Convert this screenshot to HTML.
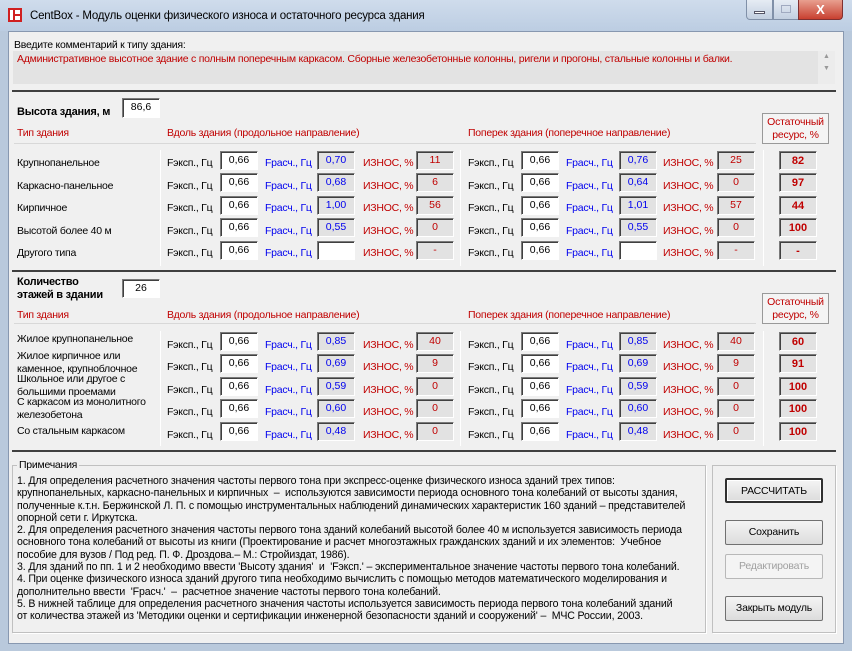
<!DOCTYPE html>
<html><head><meta charset="utf-8">
<style>
*{margin:0;padding:0;box-sizing:border-box}
body{width:852px;height:651px;overflow:hidden;background:#b9c9dc;font-family:"Liberation Sans",sans-serif;font-size:11px;color:#000;position:relative}
.a{position:absolute;white-space:nowrap}
.t{position:absolute;white-space:nowrap;font-size:10.5px;letter-spacing:-0.25px;line-height:13px}
.r{color:#c00000}.b{color:#0000ee}
.in,.ro,.rs{position:absolute;height:19px;border:1px solid;border-color:#7a7a7a #fff #fff #7a7a7a;box-shadow:inset 1px 1px #404040;text-align:center;font-size:10.5px;line-height:14px;padding-top:1px}
.in{background:#fff;width:38px}
.ro{background:#e2e2e2;width:38px;color:#0000ee}
.ro.i{color:#c00000}
.rs{background:#e2e2e2;width:38px;color:#c00000;font-weight:bold;font-size:11px;padding-top:2px}
.vl{position:absolute;width:1px;background:#d0d0d0;border-right:1px solid #fff}
.hl{position:absolute;height:2px;background:#404040}
.btn{position:absolute;left:725px;width:98px;height:25px;background:linear-gradient(#f4f4f4,#dcdcdc);border:1px solid #707070;border-radius:2px;text-align:center;line-height:23px;font-size:10.5px;letter-spacing:-0.2px}
</style></head><body>
<div class="a" style="left:0;top:0;width:852px;height:31px;background:linear-gradient(#cfdcec,#bccde2)"></div>
<div class="a" style="left:8px;top:8px;width:14px;height:14px;border:2px solid #d02020;background:#fff"></div>
<div class="a" style="left:13px;top:8px;width:2px;height:14px;background:#d02020"></div>
<div class="a" style="left:13px;top:14px;width:7px;height:2px;background:#d02020"></div>
<div class="t" style="left:30px;top:10px;font-size:11.5px;letter-spacing:-0.2px">CentBox - Модуль оценки физического износа и остаточного ресурса здания</div>
<div class="a" style="left:746px;top:0;width:27px;height:20px;background:linear-gradient(#e6ecf4,#c2cfe0);border:1px solid #8090a8;border-top:none;border-radius:0 0 0 4px"></div>
<div class="a" style="left:754px;top:11px;width:11px;height:3px;background:#fff;border:1px solid #556"></div>
<div class="a" style="left:773px;top:0;width:26px;height:20px;background:linear-gradient(#e6ecf4,#c2cfe0);border:1px solid #8090a8;border-top:none"></div>
<div class="a" style="left:781px;top:5px;width:10px;height:8px;border:1px solid #a0aac0"></div>
<div class="a" style="left:798px;top:0;width:45px;height:20px;background:linear-gradient(#e8a090,#c84030);border:1px solid #803030;border-top:none;border-radius:0 0 4px 0;color:#fff;font-weight:bold;text-align:center;line-height:19px;font-size:13px">X</div>
<div class="a" style="left:8px;top:31px;width:836px;height:613px;background:#f0f0f0;border:1px solid #8898b0"></div>

<div class="t" style="left:14px;top:39px">Введите комментарий к типу здания:</div>
<div class="a" style="left:13px;top:51px;width:805px;height:33px;background:#e3e3e3"></div>
<div class="t r" style="left:17px;top:53px">Административное высотное здание с полным поперечным каркасом. Сборные железобетонные колонны, ригели и прогоны, стальные колонны и балки.</div>
<div class="a" style="left:818px;top:51px;width:17px;height:33px;background:#ececec;color:#999;font-size:7px;text-align:center;line-height:12px">▲<br>▼</div>
<div class="hl" style="left:12px;top:90px;width:824px"></div>

<div class="t" style="left:17px;top:106px;font-weight:bold;font-size:11px">Высота здания, м</div>
<div class="in" style="left:122px;top:98px;height:20px">86,6</div>
<div class="a" style="left:762px;top:113px;width:67px;height:31px;border:1px solid #999;color:#c00000;text-align:center;line-height:13px;padding-top:2px;background:#f4f4f4;font-size:10.5px;letter-spacing:-0.2px">Остаточный<br>ресурс, %</div>

<div class="t r" style="left:17px;top:127px">Тип здания</div>
<div class="t r" style="left:167px;top:127px">Вдоль здания (продольное направление)</div>
<div class="t r" style="left:468px;top:127px">Поперек здания (поперечное направление)</div>
<div class="a" style="left:14px;top:143px;width:742px;height:1px;background:#fff;border-top:1px solid #d8d8d8"></div>
<div class="vl" style="left:160px;top:150px;height:116px"></div>
<div class="vl" style="left:460px;top:150px;height:116px"></div>
<div class="vl" style="left:763px;top:150px;height:116px"></div>

<div class="t" style="left:17px;top:157px">Крупнопанельное</div>
<div class="t" style="left:17px;top:180px">Каркасно-панельное</div>
<div class="t" style="left:17px;top:202px">Кирпичное</div>
<div class="t" style="left:17px;top:225px">Высотой более 40 м</div>
<div class="t" style="left:17px;top:247px">Другого типа</div>

<div class="t" style="left:167px;top:157px">Fэксп., Гц</div><div class="in" style="left:220px;top:151px">0,66</div><div class="t b" style="left:265px;top:157px">Fрасч., Гц</div><div class="ro" style="left:317px;top:151px">0,70</div><div class="t r" style="left:363px;top:157px">ИЗНОС, %</div><div class="ro i" style="left:416px;top:151px">11</div>
<div class="t" style="left:468px;top:157px">Fэксп., Гц</div><div class="in" style="left:521px;top:151px">0,66</div><div class="t b" style="left:566px;top:157px">Fрасч., Гц</div><div class="ro" style="left:619px;top:151px">0,76</div><div class="t r" style="left:663px;top:157px">ИЗНОС, %</div><div class="ro i" style="left:717px;top:151px">25</div><div class="rs" style="left:779px;top:151px">82</div>

<div class="t" style="left:167px;top:180px">Fэксп., Гц</div><div class="in" style="left:220px;top:173px">0,66</div><div class="t b" style="left:265px;top:180px">Fрасч., Гц</div><div class="ro" style="left:317px;top:173px">0,68</div><div class="t r" style="left:363px;top:180px">ИЗНОС, %</div><div class="ro i" style="left:416px;top:173px">6</div>
<div class="t" style="left:468px;top:180px">Fэксп., Гц</div><div class="in" style="left:521px;top:173px">0,66</div><div class="t b" style="left:566px;top:180px">Fрасч., Гц</div><div class="ro" style="left:619px;top:173px">0,64</div><div class="t r" style="left:663px;top:180px">ИЗНОС, %</div><div class="ro i" style="left:717px;top:173px">0</div><div class="rs" style="left:779px;top:173px">97</div>

<div class="t" style="left:167px;top:202px">Fэксп., Гц</div><div class="in" style="left:220px;top:196px">0,66</div><div class="t b" style="left:265px;top:202px">Fрасч., Гц</div><div class="ro" style="left:317px;top:196px">1,00</div><div class="t r" style="left:363px;top:202px">ИЗНОС, %</div><div class="ro i" style="left:416px;top:196px">56</div>
<div class="t" style="left:468px;top:202px">Fэксп., Гц</div><div class="in" style="left:521px;top:196px">0,66</div><div class="t b" style="left:566px;top:202px">Fрасч., Гц</div><div class="ro" style="left:619px;top:196px">1,01</div><div class="t r" style="left:663px;top:202px">ИЗНОС, %</div><div class="ro i" style="left:717px;top:196px">57</div><div class="rs" style="left:779px;top:196px">44</div>

<div class="t" style="left:167px;top:225px">Fэксп., Гц</div><div class="in" style="left:220px;top:218px">0,66</div><div class="t b" style="left:265px;top:225px">Fрасч., Гц</div><div class="ro" style="left:317px;top:218px">0,55</div><div class="t r" style="left:363px;top:225px">ИЗНОС, %</div><div class="ro i" style="left:416px;top:218px">0</div>
<div class="t" style="left:468px;top:225px">Fэксп., Гц</div><div class="in" style="left:521px;top:218px">0,66</div><div class="t b" style="left:566px;top:225px">Fрасч., Гц</div><div class="ro" style="left:619px;top:218px">0,55</div><div class="t r" style="left:663px;top:225px">ИЗНОС, %</div><div class="ro i" style="left:717px;top:218px">0</div><div class="rs" style="left:779px;top:218px">100</div>

<div class="t" style="left:167px;top:247px">Fэксп., Гц</div><div class="in" style="left:220px;top:241px">0,66</div><div class="t b" style="left:265px;top:247px">Fрасч., Гц</div><div class="in" style="left:317px;top:241px"></div><div class="t r" style="left:363px;top:247px">ИЗНОС, %</div><div class="ro i" style="left:416px;top:241px">-</div>
<div class="t" style="left:468px;top:247px">Fэксп., Гц</div><div class="in" style="left:521px;top:241px">0,66</div><div class="t b" style="left:566px;top:247px">Fрасч., Гц</div><div class="in" style="left:619px;top:241px"></div><div class="t r" style="left:663px;top:247px">ИЗНОС, %</div><div class="ro i" style="left:717px;top:241px">-</div><div class="rs" style="left:779px;top:241px">-</div>

<div class="hl" style="left:12px;top:270px;width:824px"></div>

<div class="t" style="left:17px;top:276px;font-weight:bold;font-size:11px;line-height:13px">Количество<br>этажей в здании</div>
<div class="in" style="left:122px;top:279px;height:19px">26</div>
<div class="a" style="left:762px;top:293px;width:67px;height:31px;border:1px solid #999;color:#c00000;text-align:center;line-height:13px;padding-top:2px;background:#f4f4f4;font-size:10.5px;letter-spacing:-0.2px">Остаточный<br>ресурс, %</div>
<div class="t r" style="left:17px;top:309px">Тип здания</div>
<div class="t r" style="left:167px;top:309px">Вдоль здания (продольное направление)</div>
<div class="t r" style="left:468px;top:309px">Поперек здания (поперечное направление)</div>
<div class="a" style="left:14px;top:323px;width:742px;height:1px;background:#fff;border-top:1px solid #d8d8d8"></div>
<div class="vl" style="left:160px;top:331px;height:115px"></div>
<div class="vl" style="left:460px;top:331px;height:115px"></div>
<div class="vl" style="left:763px;top:331px;height:115px"></div>

<div class="t" style="left:17px;top:333px">Жилое крупнопанельное</div>
<div class="t" style="left:17px;top:350px;line-height:12.5px">Жилое кирпичное или<br>каменное, крупноблочное</div>
<div class="t" style="left:17px;top:373px;line-height:12.5px">Школьное или другое с<br>большими проемами</div>
<div class="t" style="left:17px;top:396px;line-height:12.5px">С каркасом из монолитного<br>железобетона</div>
<div class="t" style="left:17px;top:425px">Со стальным каркасом</div>

<div class="t" style="left:167px;top:339px">Fэксп., Гц</div><div class="in" style="left:220px;top:332px">0,66</div><div class="t b" style="left:265px;top:339px">Fрасч., Гц</div><div class="ro" style="left:317px;top:332px">0,85</div><div class="t r" style="left:363px;top:339px">ИЗНОС, %</div><div class="ro i" style="left:416px;top:332px">40</div>
<div class="t" style="left:468px;top:339px">Fэксп., Гц</div><div class="in" style="left:521px;top:332px">0,66</div><div class="t b" style="left:566px;top:339px">Fрасч., Гц</div><div class="ro" style="left:619px;top:332px">0,85</div><div class="t r" style="left:663px;top:339px">ИЗНОС, %</div><div class="ro i" style="left:717px;top:332px">40</div><div class="rs" style="left:779px;top:332px">60</div>

<div class="t" style="left:167px;top:361px">Fэксп., Гц</div><div class="in" style="left:220px;top:354px">0,66</div><div class="t b" style="left:265px;top:361px">Fрасч., Гц</div><div class="ro" style="left:317px;top:354px">0,69</div><div class="t r" style="left:363px;top:361px">ИЗНОС, %</div><div class="ro i" style="left:416px;top:354px">9</div>
<div class="t" style="left:468px;top:361px">Fэксп., Гц</div><div class="in" style="left:521px;top:354px">0,66</div><div class="t b" style="left:566px;top:361px">Fрасч., Гц</div><div class="ro" style="left:619px;top:354px">0,69</div><div class="t r" style="left:663px;top:361px">ИЗНОС, %</div><div class="ro i" style="left:717px;top:354px">9</div><div class="rs" style="left:779px;top:354px">91</div>

<div class="t" style="left:167px;top:384px">Fэксп., Гц</div><div class="in" style="left:220px;top:377px">0,66</div><div class="t b" style="left:265px;top:384px">Fрасч., Гц</div><div class="ro" style="left:317px;top:377px">0,59</div><div class="t r" style="left:363px;top:384px">ИЗНОС, %</div><div class="ro i" style="left:416px;top:377px">0</div>
<div class="t" style="left:468px;top:384px">Fэксп., Гц</div><div class="in" style="left:521px;top:377px">0,66</div><div class="t b" style="left:566px;top:384px">Fрасч., Гц</div><div class="ro" style="left:619px;top:377px">0,59</div><div class="t r" style="left:663px;top:384px">ИЗНОС, %</div><div class="ro i" style="left:717px;top:377px">0</div><div class="rs" style="left:779px;top:377px">100</div>

<div class="t" style="left:167px;top:406px">Fэксп., Гц</div><div class="in" style="left:220px;top:399px">0,66</div><div class="t b" style="left:265px;top:406px">Fрасч., Гц</div><div class="ro" style="left:317px;top:399px">0,60</div><div class="t r" style="left:363px;top:406px">ИЗНОС, %</div><div class="ro i" style="left:416px;top:399px">0</div>
<div class="t" style="left:468px;top:406px">Fэксп., Гц</div><div class="in" style="left:521px;top:399px">0,66</div><div class="t b" style="left:566px;top:406px">Fрасч., Гц</div><div class="ro" style="left:619px;top:399px">0,60</div><div class="t r" style="left:663px;top:406px">ИЗНОС, %</div><div class="ro i" style="left:717px;top:399px">0</div><div class="rs" style="left:779px;top:399px">100</div>

<div class="t" style="left:167px;top:429px">Fэксп., Гц</div><div class="in" style="left:220px;top:422px">0,66</div><div class="t b" style="left:265px;top:429px">Fрасч., Гц</div><div class="ro" style="left:317px;top:422px">0,48</div><div class="t r" style="left:363px;top:429px">ИЗНОС, %</div><div class="ro i" style="left:416px;top:422px">0</div>
<div class="t" style="left:468px;top:429px">Fэксп., Гц</div><div class="in" style="left:521px;top:422px">0,66</div><div class="t b" style="left:566px;top:429px">Fрасч., Гц</div><div class="ro" style="left:619px;top:422px">0,48</div><div class="t r" style="left:663px;top:429px">ИЗНОС, %</div><div class="ro i" style="left:717px;top:422px">0</div><div class="rs" style="left:779px;top:422px">100</div>

<div class="hl" style="left:12px;top:450px;width:824px"></div>

<div class="a" style="left:12px;top:465px;width:694px;height:168px;border:1px solid #c0c0c0;box-shadow:1px 1px #fff"></div>
<div class="t" style="left:17px;top:459px;background:#f0f0f0;padding:0 2px">Примечания</div>
<div class="t" style="left:17px;top:475px;line-height:12.3px;font-size:10.6px;letter-spacing:-0.15px">1. Для определения расчетного значения частоты первого тона при экспресс-оценке физического износа зданий трех типов:<br>крупнопанельных, каркасно-панельных и кирпичных &nbsp;– &nbsp;используются зависимости периода основного тона колебаний от высоты здания,<br>полученные к.т.н. Бержинской Л. П. с помощью инструментальных наблюдений динамических характеристик 160 зданий – представителей<br>опорной сети г. Иркутска.<br>2. Для определения расчетного значения частоты первого тона зданий колебаний высотой более 40 м используется зависимость периода<br>основного тона колебаний от высоты из книги (Проектирование и расчет многоэтажных гражданских зданий и их элементов: &nbsp;Учебное<br>пособие для вузов / Под ред. П. Ф. Дроздова.– М.: Стройиздат, 1986).<br>3. Для зданий по пп. 1 и 2 необходимо ввести 'Высоту здания' &nbsp;и &nbsp;'Fэксп.' – экспериментальное значение частоты первого тона колебаний.<br>4. При оценке физического износа зданий другого типа необходимо вычислить с помощью методов математического моделирования и<br>дополнительно ввести &nbsp;'Fрасч.' &nbsp;– &nbsp;расчетное значение частоты первого тона колебаний.<br>5. В нижней таблице для определения расчетного значения частоты используется зависимость периода первого тона колебаний зданий<br>от количества этажей из 'Методики оценки и сертификации инженерной безопасности зданий и сооружений' – &nbsp;МЧС России, 2003.</div>

<div class="a" style="left:712px;top:465px;width:124px;height:168px;border:1px solid #c0c0c0;box-shadow:1px 1px #fff"></div>
<div class="btn" style="top:478px;border:2px solid #303030;box-shadow:inset 0 0 0 1px #fff">РАССЧИТАТЬ</div>
<div class="btn" style="top:520px">Сохранить</div>
<div class="btn" style="top:554px;color:#a0a0a0;border-color:#b8b8b8;background:#f4f4f4">Редактировать</div>
<div class="btn" style="top:596px">Закрыть модуль</div>
</body></html>
